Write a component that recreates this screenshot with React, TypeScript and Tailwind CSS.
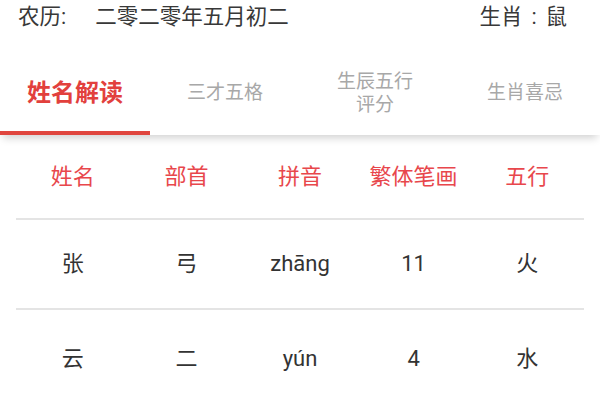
import React from "react";

const tabs = [
  { label: ["姓名解读"], active: true },
  { label: ["三才五格"], active: false },
  { label: ["生辰五行", "评分"], active: false },
  { label: ["生肖喜忌"], active: false },
];

const headers = ["姓名", "部首", "拼音", "繁体笔画", "五行"];
const rows = [
  { cells: ["张", "弓", "zhāng", "11", "火"], h: "h-[88px]" },
  { cells: ["云", "二", "yún", "4", "水"], h: "h-[98px]" },
];

export default function App() {
  return (
    <div
      className="w-[600px] h-[400px] bg-white overflow-hidden"
      style={{ fontFamily: "Roboto, 'Noto Sans CJK SC', sans-serif" }}
    >
      <div className="h-[33px] flex items-center justify-between pl-[18px] pr-[33px] text-[21.5px] text-[#383838] leading-none">
        <div className="flex items-center">
          <span>农历:</span>
          <span className="ml-[29px]">二零二零年五月初二</span>
        </div>
        <div className="flex items-center">
          <span>生肖</span>
          <span className="w-[23px] text-center">:</span>
          <span>鼠</span>
        </div>
      </div>

      <div className="relative z-10 h-[102px] flex bg-white shadow-[0_6px_8px_-3px_rgba(0,0,0,0.18)]">
        {tabs.map((t, i) => (
          <div key={i} className="flex-1 flex flex-col">
            <div className="flex-1 pt-[21px] flex flex-col items-center justify-center">
              {t.label.map((l, j) => (
                <div
                  key={j}
                  className={
                    t.active
                      ? "text-[24px] font-bold text-[#e2403d] leading-[28px]"
                      : "text-[19px] text-[#a8a8a8] leading-[23px]"
                  }
                >
                  {l}
                </div>
              ))}
            </div>
            <div className={t.active ? "h-[4px] bg-[#e0463f]" : "h-[4px]"} />
          </div>
        ))}
      </div>

      <div className="px-[16px]">
        <div className="h-[83px] grid grid-cols-5 items-center text-center text-[22px] text-[#e8474c] leading-none">
          {headers.map((h) => (
            <div key={h}>{h}</div>
          ))}
        </div>
        {rows.map((r, i) => (
          <div key={i}>
            <div className="h-[2px] bg-[#e4e4e4]" />
            <div className={`${r.h} grid grid-cols-5 items-center text-center text-[22px] text-[#333333] leading-none`}>
              {r.cells.map((c, j) => (
                <div key={j}>{c}</div>
              ))}
            </div>
          </div>
        ))}
      </div>
    </div>
  );
}
